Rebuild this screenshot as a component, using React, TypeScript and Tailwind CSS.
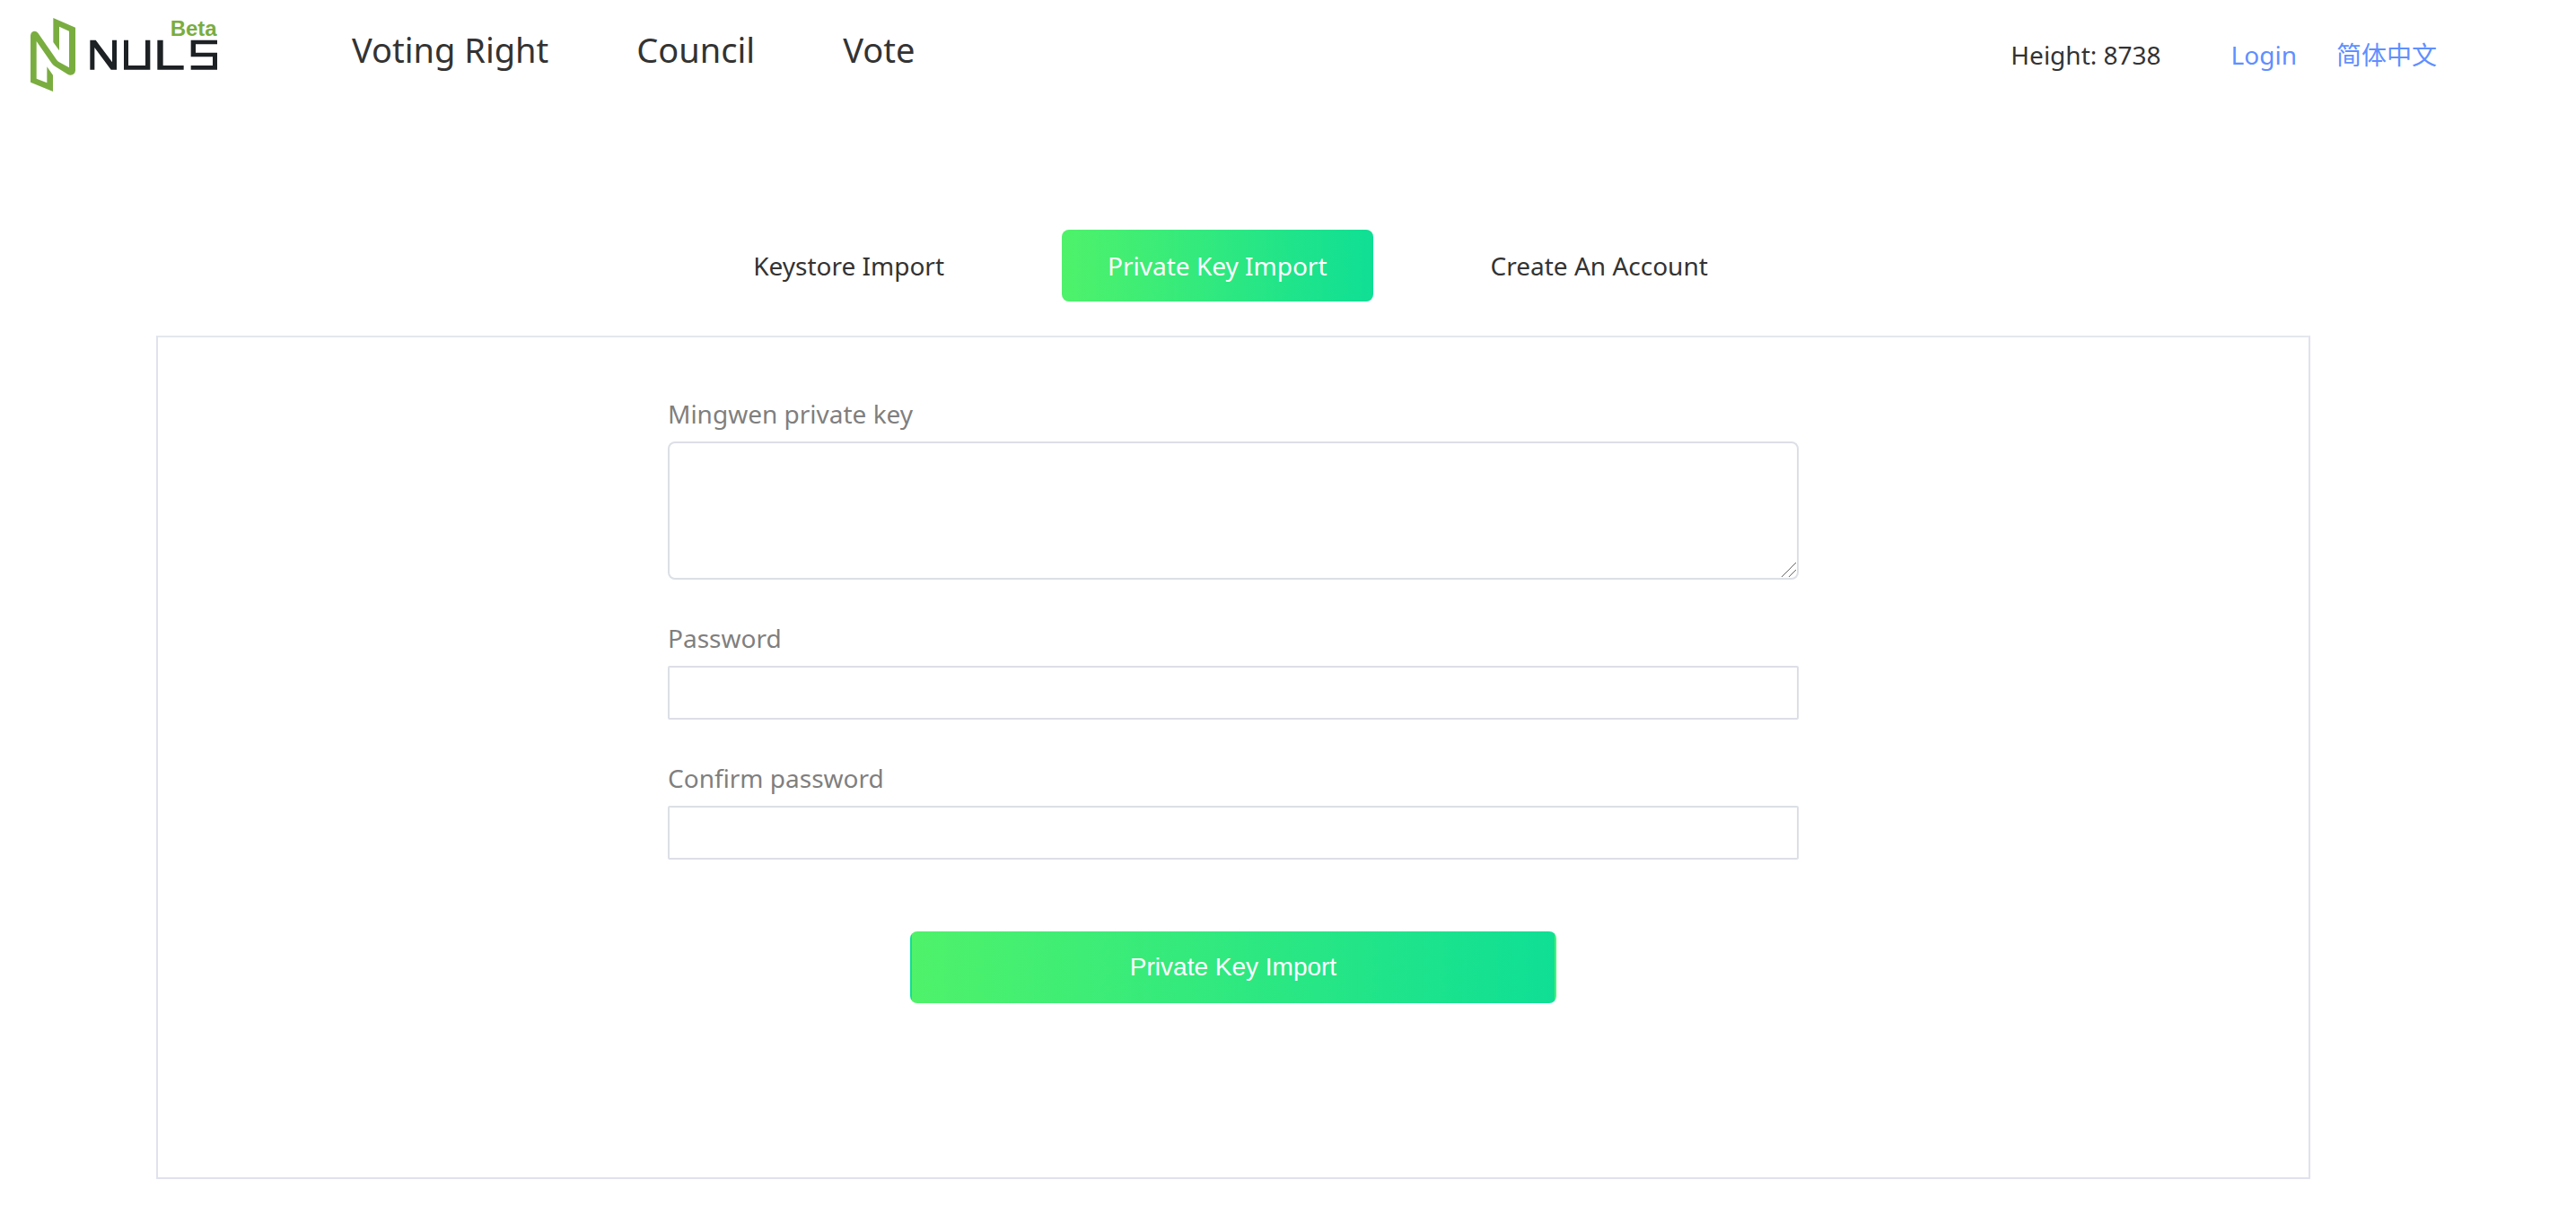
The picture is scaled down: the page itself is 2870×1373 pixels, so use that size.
import { useState } from "react";

function Logo() {
  return (
    <svg viewBox="102 48 624 258" className="h-[86px] w-[208px]" role="img" aria-label="NULS Beta">
      <path
        fill="#7aad40"
        fillRule="evenodd"
        d="M102 275V119Q103 106 115 104Q122 104 127 110L190 201Q193 205 198 208L231 226V104L198 89V169L178 141V60L252 92V236Q250 250 236 251Q231 251 226 248L183 221Q178 218 174 213L122 138V263L157 277V223L177 251V306Z"
      />
      <g fill="#1d2124">
        <path d="M301 134H320L375 208V134H390V233H371L316 159V233H301Z" />
        <path d="M414 134H429V219H486V134H502V233H414Z" />
        <path d="M526 134H545V219H614V233H526Z" />
        <path d="M638 134H726V148H654V176H726V233H638V219H711V190H638Z" />
      </g>
      <text x="569" y="120" fill="#7aad40" fontSize="72" fontWeight="700" fontFamily="Liberation Sans, Arial, sans-serif">
        Beta
      </text>
    </svg>
  );
}

function Header({ height }: { height: number }) {
  return (
    <header className="flex items-start pr-[155px] pl-[34px]">
      <a href="#home" className="block pt-4">
        <Logo />
      </a>
      <nav className="ml-[150px] flex gap-[98px] pt-[27px] text-[38px] leading-[56px]">
        <a href="#voting-right">Voting Right</a>
        <a href="#council">Council</a>
        <a href="#vote">Vote</a>
      </nav>
      <div className="ml-auto flex pt-[33px] text-[28px] leading-[56px]">
        <span>Height: {height}</span>
        <a href="#login" className="ml-[78px] text-[#608fff]">
          Login
        </a>
        <a href="#zh" lang="zh-CN" className="ml-11 text-[#608fff]">
          简体中文
        </a>
      </div>
    </header>
  );
}

const tabs = ["Keystore Import", "Private Key Import", "Create An Account"];

function Tabs({ active, onSelect }: { active: string; onSelect: (tab: string) => void }) {
  return (
    <div role="tablist" className="flex justify-center gap-20 pr-1.5">
      {tabs.map((tab) => (
        <button
          key={tab}
          type="button"
          role="tab"
          aria-selected={tab === active}
          onClick={() => onSelect(tab)}
          className={
            tab === active
              ? "h-20 rounded-lg bg-linear-to-r/srgb from-[#4ff26a] to-[#0fdf95] px-[51px] text-[28px] text-white"
              : "h-20 rounded-lg px-[51px] text-[28px]"
          }
        >
          {tab}
        </button>
      ))}
    </div>
  );
}

function ResizeGrip() {
  return (
    <svg viewBox="0 0 16 16" className="pointer-events-none absolute right-[3px] bottom-[3px] size-4" aria-hidden="true">
      <path d="M0 16L16 0M8 16L16 8" stroke="#666" strokeWidth="1" fill="none" />
    </svg>
  );
}

function PasswordField({ id, label }: { id: string; label: string }) {
  return (
    <div className="flex flex-col gap-2.5">
      <label htmlFor={id} className="text-[28px] leading-[42px] text-[#7f7f7f]">
        {label}
      </label>
      <input
        id={id}
        type="password"
        className="h-[60px] w-full rounded-xs border-2 border-[#dcdfe6] bg-white px-5 text-[28px] outline-none"
      />
    </div>
  );
}

export default function App() {
  const [active, setActive] = useState("Private Key Import");

  return (
    <div className="min-h-screen bg-white font-['Noto_Sans','Noto_Sans_CJK_SC',sans-serif] text-[#333]">
      <Header height={8738} />
      <main className="pt-[154px] pr-[296px] pb-14 pl-[174px]">
        <Tabs active={active} onSelect={setActive} />
        <section className="mt-[38px] border-2 border-[#dfe2ee] border-t-[#e4e7ed] pt-16 pb-[194px]">
          <form onSubmit={(e) => e.preventDefault()} className="mx-auto flex max-w-[1260px] flex-col gap-11">
            <div className="flex flex-col gap-2.5">
              <label htmlFor="private-key" className="text-[28px] leading-[42px] text-[#7f7f7f]">
                Mingwen private key
              </label>
              <div className="relative">
                <textarea
                  id="private-key"
                  className="block h-[154px] w-full resize-none rounded-lg border-2 border-[#dcdfe6] bg-white px-5 py-2 text-[28px] outline-none"
                />
                <ResizeGrip />
              </div>
            </div>
            <PasswordField id="password" label="Password" />
            <PasswordField id="confirm-password" label="Confirm password" />
            <button
              type="submit"
              className="mx-auto mt-9 h-20 w-full max-w-[720px] rounded-lg border-2 border-transparent bg-linear-to-r/srgb from-[#4ff26a] to-[#0fdf95] font-['Liberation_Sans',Arial,sans-serif] text-[28px] text-white"
            >
              Private Key Import
            </button>
          </form>
        </section>
      </main>
    </div>
  );
}
